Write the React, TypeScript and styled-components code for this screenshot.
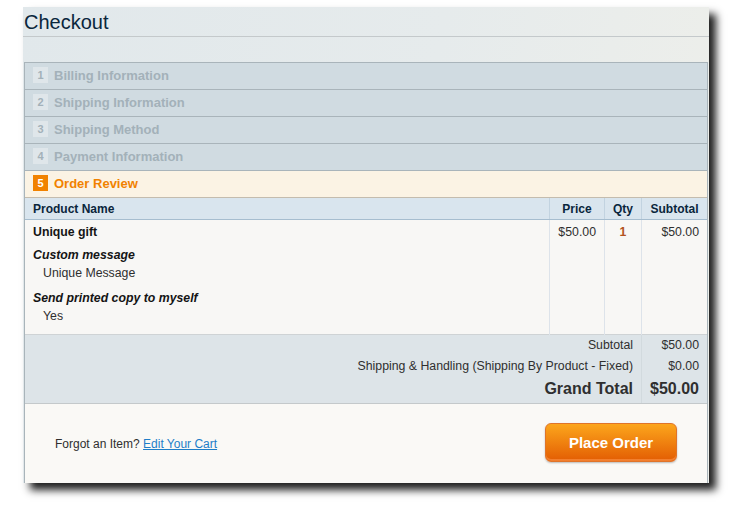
import React from "react";
import styled, { createGlobalStyle } from "styled-components";

const GlobalStyle = createGlobalStyle`
  html, body {
    margin: 0;
    padding: 0;
    background: #ffffff;
    font-family: "Liberation Sans", Arial, sans-serif;
  }
`;

const Page = styled.div`
  min-height: 509px;
  box-sizing: border-box;
  padding: 7px 0 26px 23px;
`;

const Window = styled.div`
  width: 686px;
  height: 476px;
  background: linear-gradient(100deg, #e1e8eb 0%, #e6ebec 55%, #eeefea 100%);
  box-shadow: 7px 7px 8px rgba(0, 0, 0, 0.88);
  display: flex;
  flex-direction: column;
`;

const Title = styled.h1`
  margin: 0;
  height: 27px;
  padding: 2px 0 0 1px;
  font-size: 20px;
  font-weight: normal;
  color: #0a263c;
  line-height: 26px;
  border-bottom: 1px solid #c4c9cb;
`;

const Steps = styled.div`
  margin: 25px 1px 0 1px;
  border: 1px solid #a9b4ba;
  border-bottom: 0;
  display: flex;
  flex-direction: column;
  flex: 1;
  min-height: 0;
`;

const Step = styled.div<{ $active?: boolean }>`
  height: 24px;
  flex-shrink: 0;
  border-bottom: 1px solid ${(p) => (p.$active ? "#c4bcae" : "#a9b4ba")};
  background: ${(p) => (p.$active ? "#fbf3e4" : "#d0dbe1")};
  display: flex;
  align-items: center;
  padding: 0 0 2px 8px;
  gap: 6px;
`;

const StepNum = styled.span<{ $active?: boolean }>`
  width: 15px;
  height: 16px;
  display: flex;
  align-items: center;
  justify-content: center;
  font-size: 11px;
  font-weight: bold;
  background: ${(p) => (p.$active ? "#f18200" : "#dfe6ea")};
  color: ${(p) => (p.$active ? "#ffffff" : "#a3b1b9")};
`;

const StepTitle = styled.span<{ $active?: boolean }>`
  font-size: 13px;
  font-weight: bold;
  color: ${(p) => (p.$active ? "#f18200" : "#a3b1b9")};
`;

const Table = styled.table`
  width: 100%;
  flex-shrink: 0;
  border-collapse: collapse;
  font-size: 12.3px;
  color: #2f2f2f;
`;

const Th = styled.th<{ $align?: string; $w?: number }>`
  height: 21px;
  padding: 0 8px;
  background: #d9e5ee;
  border-bottom: 1px solid #a6bdcf;
  border-left: 1px solid #c2d3e0;
  text-align: ${(p) => p.$align || "center"};
  width: ${(p) => (p.$w ? `${p.$w}px` : "auto")};
  color: #0a263c;
  font-size: 12px;
  &:first-child {
    border-left: 0;
  }
`;

const Td = styled.td<{ $align?: string }>`
  background: #f8f7f5;
  border-left: 1px solid #dde3ea;
  vertical-align: top;
  padding: 5px 8px 0;
  text-align: ${(p) => p.$align || "left"};
  &:first-child {
    border-left: 0;
  }
`;

const BodyRow = styled.tr`
  height: 115px;
  border-bottom: 1px solid #cfd3d5;
`;

const ProductName = styled.div`
  font-weight: bold;
  color: #141414;
`;

const OptionValue = styled.div`
  padding-left: 10px;
  margin-top: 4px;
`;

const OptionLabel = styled.div`
  font-weight: bold;
  font-style: italic;
  color: #141414;
  margin-top: 9px;
  ${OptionValue} + & {
    margin-top: 11px;
  }
`;

const Qty = styled.span`
  font-weight: bold;
  color: #b3541e;
`;

const TotalRow = styled.tr<{ $h: number; $big?: boolean }>`
  height: ${(p) => p.$h}px;
  font-size: ${(p) => (p.$big ? "16px" : "12.3px")};
  font-weight: ${(p) => (p.$big ? "bold" : "normal")};
`;

const TotalLabel = styled.td`
  text-align: right;
  padding: 0 8px 0 0;
  background: #dde4e8;
`;

const TotalValue = styled.td`
  text-align: right;
  padding: 0 8px 0 0;
  background: #dde4e8;
  border-left: 1px solid #d2dade;
`;

const Footer = styled.div`
  border-top: 1px solid #c4c9cb;
  background: #faf9f6;
  flex: 1;
  display: flex;
  align-items: center;
  justify-content: space-between;
  padding: 1px 30px 0;
  font-size: 12px;
  color: #2f2f2f;
`;

const CartLink = styled.a`
  color: #1e7ec8;
  text-decoration: underline;
`;

const PlaceOrder = styled.button`
  width: 132px;
  height: 39px;
  border: 1px solid #e0742a;
  border-radius: 6px;
  background: linear-gradient(#fca61c, #e35d03);
  color: #ffffff;
  font-family: "Liberation Sans", Arial, sans-serif;
  font-weight: bold;
  font-size: 15px;
  box-shadow: 0 1px 2px rgba(0, 0, 0, 0.25), inset 0 -2px 0 rgba(255, 160, 90, 0.5);
  cursor: pointer;
  margin-top: -2px;
`;

const steps = [
  "Billing Information",
  "Shipping Information",
  "Shipping Method",
  "Payment Information",
  "Order Review",
];

const totals = [
  { label: "Subtotal", value: "$50.00", h: 20 },
  {
    label: "Shipping & Handling (Shipping By Product - Fixed)",
    value: "$0.00",
    h: 22,
  },
  { label: "Grand Total", value: "$50.00", h: 24, big: true },
];

export default function App() {
  return (
    <Page>
      <GlobalStyle />
      <Window>
        <Title>Checkout</Title>
        <Steps>
          {steps.map((s, i) => {
            const active = i === steps.length - 1;
            return (
              <Step key={s} $active={active}>
                <StepNum $active={active}>{i + 1}</StepNum>
                <StepTitle $active={active}>{s}</StepTitle>
              </Step>
            );
          })}
          <Table>
            <thead>
              <tr>
                <Th $align="left">Product Name</Th>
                <Th $w={38}>Price</Th>
                <Th $w={20}>Qty</Th>
                <Th $w={49}>Subtotal</Th>
              </tr>
            </thead>
            <tbody>
              <BodyRow>
                <Td>
                  <ProductName>Unique gift</ProductName>
                  <OptionLabel>Custom message</OptionLabel>
                  <OptionValue>Unique Message</OptionValue>
                  <OptionLabel>Send printed copy to myself</OptionLabel>
                  <OptionValue>Yes</OptionValue>
                </Td>
                <Td $align="right">$50.00</Td>
                <Td $align="center">
                  <Qty>1</Qty>
                </Td>
                <Td $align="right">$50.00</Td>
              </BodyRow>
            </tbody>
            <tbody>
              {totals.map((t) => (
                <TotalRow key={t.label} $h={t.h} $big={t.big}>
                  <TotalLabel colSpan={3}>{t.label}</TotalLabel>
                  <TotalValue>{t.value}</TotalValue>
                </TotalRow>
              ))}
              <TotalRow $h={2}>
                <TotalLabel colSpan={3} />
                <TotalValue />
              </TotalRow>
            </tbody>
          </Table>
          <Footer>
            <span>
              Forgot an Item? <CartLink href="#">Edit Your Cart</CartLink>
            </span>
            <PlaceOrder>Place Order</PlaceOrder>
          </Footer>
        </Steps>
      </Window>
    </Page>
  );
}
